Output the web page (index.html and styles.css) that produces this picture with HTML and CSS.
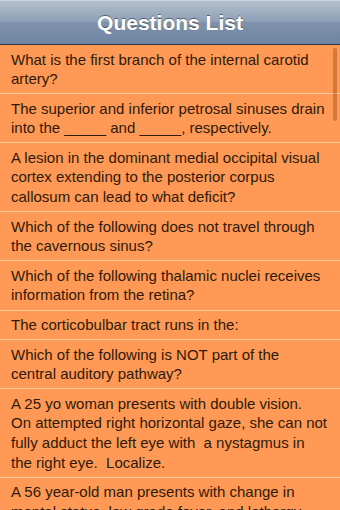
FILE: index.html
```html
<!DOCTYPE html>
<html>
<head>
    <title>Questions List</title>
    <link rel="stylesheet" href="styles.css">
</head>
<body>
    <div class="screen">
        <div class="navbar">
            <h1 class="navbar__title">Questions List</h1>
        </div>
        <div class="list">
            <ul class="list__items">
                <li class="list__item">What is the first branch of the internal carotid artery?</li>
                <li class="list__item">The superior and inferior petrosal sinuses drain into the _____ and _____, respectively.</li>
                <li class="list__item">A lesion in the dominant medial occipital visual cortex extending to the posterior corpus callosum can lead to what deficit?</li>
                <li class="list__item">Which of the following does not travel through the cavernous sinus?</li>
                <li class="list__item">Which of the following thalamic nuclei receives information from the retina?</li>
                <li class="list__item">The corticobulbar tract runs in the:</li>
                <li class="list__item">Which of the following is NOT part of the<br>central auditory pathway?</li>
                <li class="list__item">A 25 yo woman presents with double vision.<br>On attempted right horizontal gaze, she can not<br>fully adduct the left eye with &nbsp;a nystagmus in<br>the right eye. &nbsp;Localize.</li>
                <li class="list__item">A 56 year-old man presents with change in<br>mental status, low grade fever, and lethargy.</li>
            </ul>
            <!-- 滚动条 -->
            <div class="list__scrollbar"></div>
        </div>
    </div>
</body>
</html>
```

FILE: styles.css
```css
* {
    margin: 0;
    padding: 0;
    box-sizing: border-box;
}
ul, li {
    list-style: none;
}
body {
    background: #ff9955;
    font-family: "Liberation Sans", Arial, sans-serif;
}
.screen {
    width: 340px;
    height: 510px;
    overflow: hidden;
}
.navbar {
    height: 45px;
    display: flex;
    align-items: center;
    justify-content: center;
    background: linear-gradient(#b3bfcf, #8c9db4 50%, #7f92ab 50%, #6e84a2);
    border-top: 1px solid #cdd5df;
    border-bottom: 1px solid #2d3642;
}
.navbar__title {
    font-size: 21px;
    font-weight: bold;
    color: #fff;
    text-shadow: 0 -1px 0 rgba(0, 0, 0, 0.45);
}
.list {
    position: relative;
}
.list__item {
    padding: 4.5px 11px;
    font-size: 15px;
    line-height: 19.6px;
    color: #2e1a0c;
    border-bottom: 1px solid #ffc99c;
}
.list__scrollbar {
    position: absolute;
    top: 3px;
    right: 3px;
    width: 4px;
    height: 73px;
    border-radius: 2px;
    background: rgba(120, 60, 20, 0.35);
}
```
